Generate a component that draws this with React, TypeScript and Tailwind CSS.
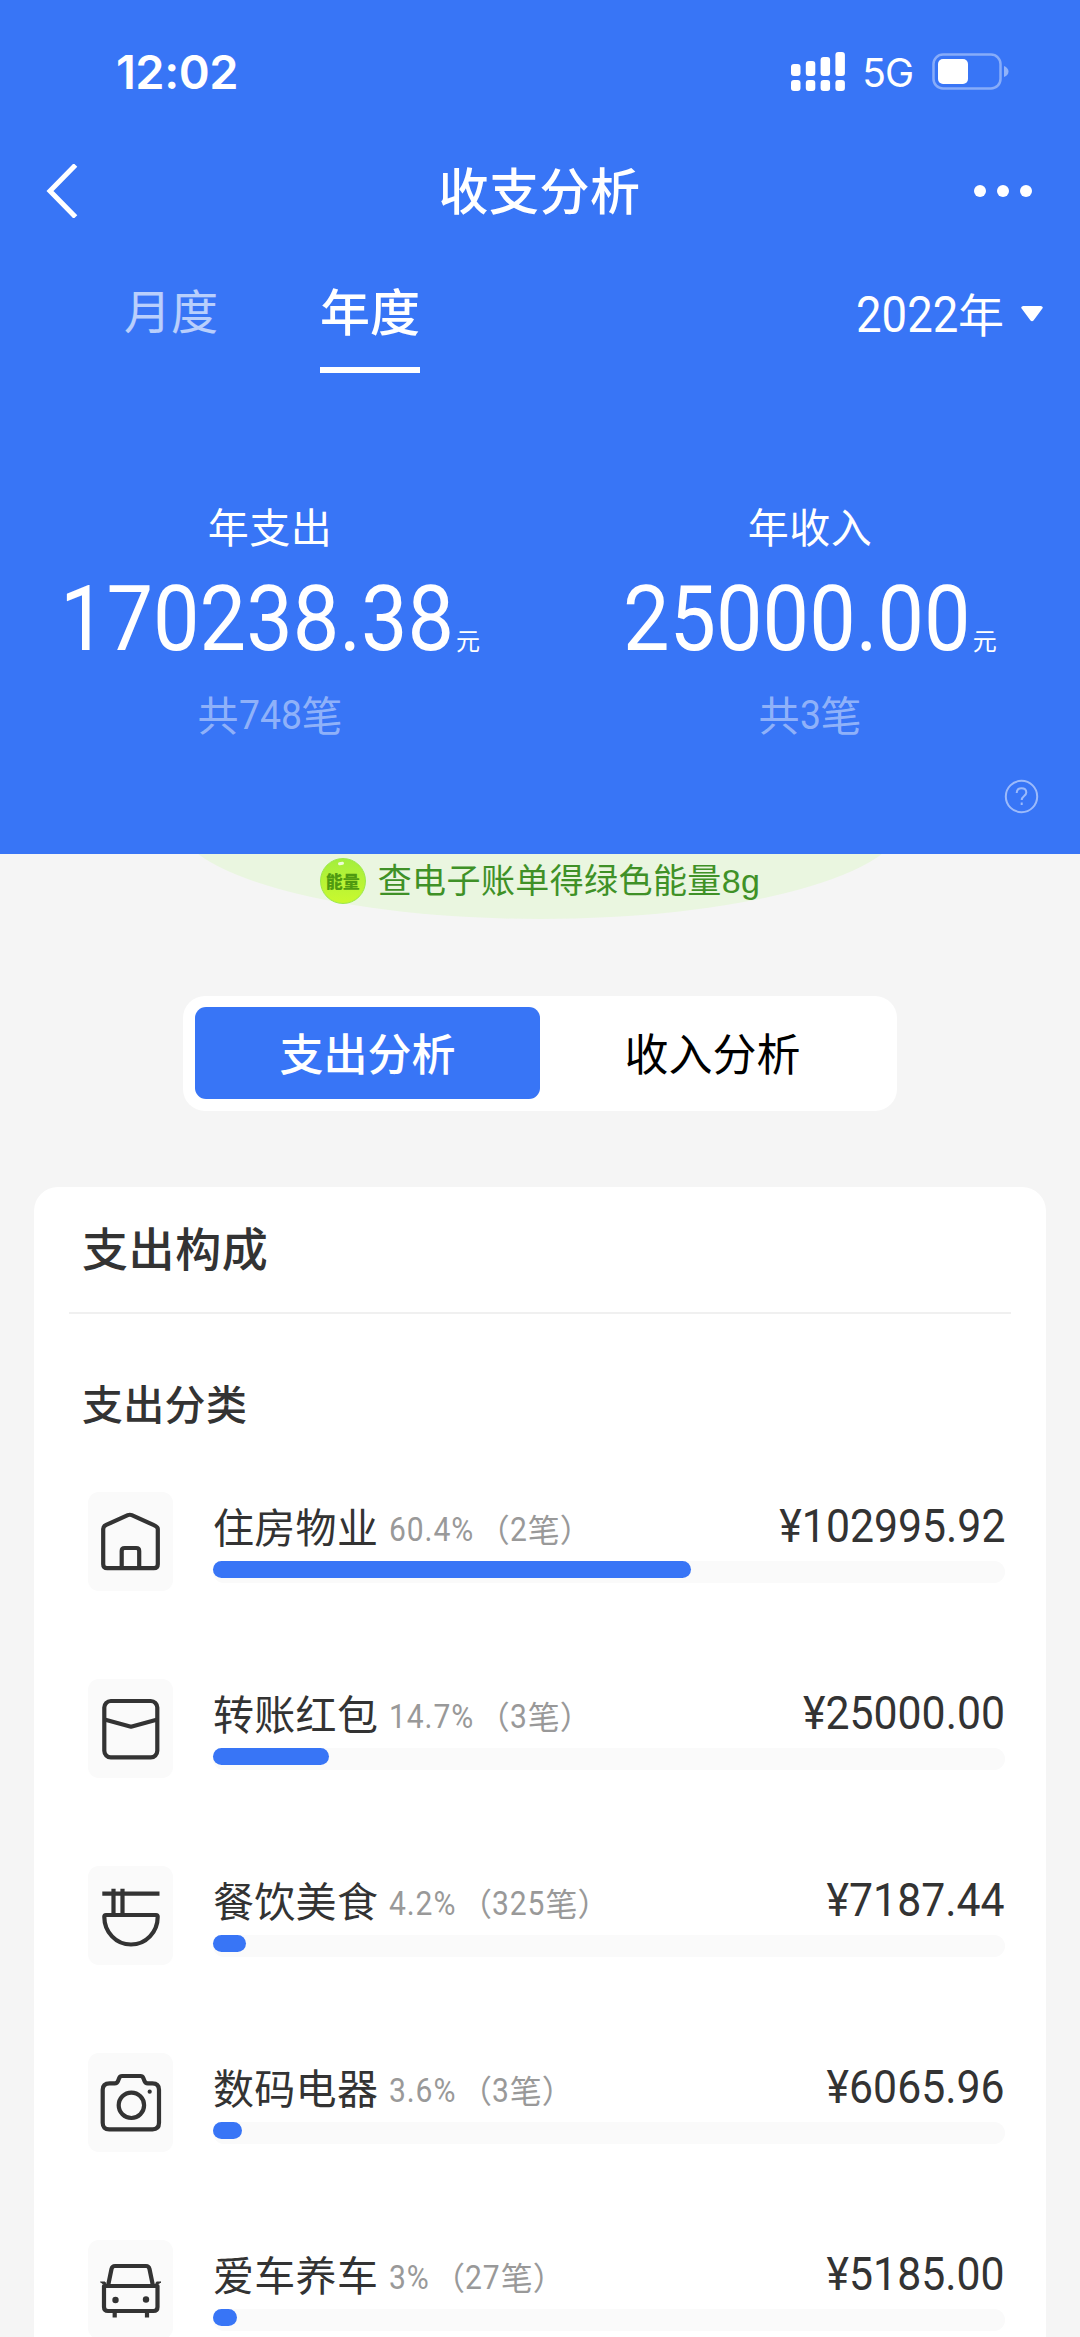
import React from 'react';

type Category = {
  name: string;
  percent: number;
  count: number;
  amount: string;
  icon: React.ReactNode;
};

const HouseIcon = () => (
  <>
    <path d="M5.200 12.900 26.800 3.200q2-.9 4 0l21.600 9.700q4.400 2 4.400 4v35.300q0 4-4 4H6.200q-4 0-4-4V16.900q0-2.600 3-4Z" />
    <path d="M20.700 56V39q0-3 3-3h11.500q3 0 3 3v17" />
  </>
);

const EnvelopeIcon = () => (
  <>
    <rect x="3.300" y="2" width="53" height="56.300" rx="6.500" />
    <path d="M3.500 20.500 30 27.700l26.500-7.200" />
  </>
);

const BowlIcon = () => (
  <>
    <path d="M1.300 7.700h57.200M12.500 2.700V29M21.500 2.700V29" />
    <path d="M5 29h50q1.700 0 1.700 1.700C56.700 46 45 58.500 30 58.500S3.300 46 3.300 30.700Q3.300 29 5 29Z" />
  </>
);

const CameraIcon = () => (
  <>
    <path d="M8.700 10.300h5q2.500 0 3.300-2.300l1.200-3q.8-2 2.800-2h18.500q2 0 2.800 2l1.200 3q.8 2.300 3.300 2.300h4.500q6.700 0 6.700 6.500v33q0 6.500-6.500 6.500H8.200q-6.500 0-6.500-6.500v-33q0-6.500 7-6.500Z" />
    <circle cx="30.400" cy="32.300" r="12.700" />
    <circle cx="48.700" cy="18.700" r="2.100" fill="#333" stroke="none" />
  </>
);

const CarIcon = () => (
  <>
    <path d="M7 26 10.500 9q.7-3 3.500-3h31q2.800 0 3.500 3L52 26" />
    <path d="M3 26h53.500v21q0 4-4 4H7q-4 0-4-4Z" />
    <path d="M-.5 22h4.500l1.500 4ZM60 22h-4.500l-1.500 4Z" fill="#333" strokeWidth="1" />
    <path d="M13.700 52v5.500M46 52v5.500" />
    <circle cx="14.500" cy="40" r="3.200" fill="#333" stroke="none" />
    <circle cx="45" cy="39.500" r="3.200" fill="#333" stroke="none" />
  </>
);

const categories: Category[] = [
  { name: '住房物业', percent: 60.4, count: 2, amount: '102995.92', icon: <HouseIcon /> },
  { name: '转账红包', percent: 14.7, count: 3, amount: '25000.00', icon: <EnvelopeIcon /> },
  { name: '餐饮美食', percent: 4.2, count: 325, amount: '7187.44', icon: <BowlIcon /> },
  { name: '数码电器', percent: 3.6, count: 3, amount: '6065.96', icon: <CameraIcon /> },
  { name: '爱车养车', percent: 3, count: 27, amount: '5185.00', icon: <CarIcon /> },
];

// Advance widths in em, digits share one width
const CHAR_WIDTH: Record<string, number> = { '.': 0.263, '%': 0.733, '¥': 0.527 };

// Narrow figures; the negative margin gives back the room that the scaling frees
const Digits = ({ text, className = '' }: { text: string; className?: string }) => {
  const width = [...text].reduce((sum, ch) => sum + (CHAR_WIDTH[ch] ?? 0.5615), 0);
  return (
    <span
      className={`inline-block origin-left scale-x-[0.91] font-['Roboto'] ${className}`}
      style={{ marginRight: `${(-width * 0.09).toFixed(3)}em` }}
    >
      {text}
    </span>
  );
};

const StatusBar = () => (
  <div className="flex h-[142px] items-start justify-between pl-[116px] pr-[71px]">
    <div className="pt-[44px] font-['Inter'] text-[47px] font-semibold leading-[56px] tracking-[-0.5px]">12:02</div>
    <div className="flex items-center pt-[44px]">
      <svg width="54" height="40" viewBox="0 0 54 40" fill="#fff">
        {[12, 9, 5, 0].map((top, i) => (
          <g key={i}>
            <rect x={i * 14.8} y={top} width="9.500" height={24 - top} rx="3" />
            <rect x={i * 14.8} y="28" width="9.500" height="11" rx="3" />
          </g>
        ))}
      </svg>
      <span className="ml-[17px] mt-[3px] font-['Inter'] text-[39px] leading-[52px] tracking-[-1px]">5G</span>
      <svg className="ml-[19px]" width="77" height="38" viewBox="0 0 77 38" fill="none">
        <rect x="1.500" y="1.500" width="67" height="34" rx="9.500" stroke="#fff" strokeOpacity=".4" strokeWidth="2.500" />
        <rect x="6" y="6" width="30" height="25" rx="5" fill="#fff" />
        <path d="M72 13q4.500 2 4.500 5.500T72 24Z" fill="#fff" fillOpacity=".45" />
      </svg>
    </div>
  </div>
);

const NavBar = () => (
  <div className="flex h-[98px] items-center justify-between pl-[46px] pr-[48px]">
    <svg width="53" height="54" viewBox="0 0 53 54" fill="none" stroke="#fff" strokeWidth="5">
      <path d="M29.500 1 4 27 29.500 53" />
    </svg>
    <h1 className="pb-[7px] pl-[6px] text-[50px] font-medium leading-[70px] tracking-[0.5px]">收支分析</h1>
    <div className="flex gap-[11px]">
      <i className="size-[12px] rounded-full bg-white" />
      <i className="size-[12px] rounded-full bg-white" />
      <i className="size-[12px] rounded-full bg-white" />
    </div>
  </div>
);

const Tabs = () => (
  <div className="flex h-[133px] items-start pl-[123px] pr-[37px] pt-[34px]">
    <button className="pl-[1px] text-[47px] leading-[70px] text-white/65">月度</button>
    <button className="ml-[102px] flex flex-col items-center text-[50px] font-medium leading-[70px]">
      年度
      <span className="mt-[23px] h-[6px] w-[100px] bg-white" />
    </button>
    <button className="ml-auto flex items-center text-[46px] leading-[76px]">
      <Digits text="2022" className="mt-[2px] text-[50px]" />
      <span className="pb-[4px]">年</span>
      <svg className="ml-[17px]" width="22" height="16" viewBox="0 0 22 16" fill="#fff">
        <path d="M2 0h18q3 1 1 3L12.500 14.500q-1.500 1.500-3 0L1 3Q-1 1 2 0Z" />
      </svg>
    </button>
  </div>
);

const YearStat = ({ label, value, count }: { label: string; value: string; count: number }) => (
  <div className="flex w-1/2 flex-col items-center">
    <div className="text-[41px] leading-[60px] tracking-[0.5px]">{label}</div>
    <div className="mt-[10px] flex h-[110px] items-baseline leading-[108px]">
      <Digits text={value} className="text-[91px]" />
      <span className="ml-[2px] text-[24px]">元</span>
    </div>
    <div className="flex items-center text-[41px] leading-[72px] text-white/45">
      共<Digits text={`${count}`} className="mt-[4px] text-[41px]" />笔
    </div>
  </div>
);

const CategoryRow = ({ name, percent, count, amount, icon }: Category) => (
  <li className="flex h-[187px] shrink-0 items-start">
    <div className="flex h-[99px] w-[85px] items-center justify-center rounded-[11px] bg-[#fafafa]">
      <svg className="overflow-visible" width="60" height="60" viewBox="0 0 60 60" fill="none" stroke="#333" strokeWidth="4.200" strokeLinejoin="round">
        {icon}
      </svg>
    </div>
    <div className="ml-[40px] w-[792px]">
      <div className="flex h-[69px] items-center">
        <span className="pb-[3px] text-[41px] leading-[64px] tracking-[0.3px] text-[#333]">{name}</span>
        <Digits text={`${percent}%`} className="ml-[11px] mt-[7px] text-[33px] tracking-[1px] text-[#999]" />
        <span className="ml-[3px] flex items-center pt-[3px] text-[32px] text-[#999]">
          （<Digits text={`${count}`} className="mt-[4px] text-[33px] tracking-[1px]" />笔）
        </span>
        <span className="ml-auto inline-block origin-right scale-x-[0.91] font-['Roboto'] text-[47px] text-[#333]">¥{amount}</span>
      </div>
      <div className="h-[22px] rounded-full bg-[#fafafa]">
        <div className="h-[17px] rounded-full bg-[#3875f6]" style={{ width: `${percent}%` }} />
      </div>
    </div>
  </li>
);

export default function App() {
  return (
    <div className="flex h-[2337px] w-[1080px] flex-col overflow-hidden bg-[#f5f5f5] font-['Noto_Sans_CJK_SC',sans-serif]">
      {/* Header */}
      <header className="h-[854px] shrink-0 bg-[#3875f6] text-white">
        <StatusBar />
        <NavBar />
        <Tabs />
        <div className="flex pt-[122px]">
          <YearStat label="年支出" value="170238.38" count={748} />
          <YearStat label="年收入" value="25000.00" count={3} />
        </div>
        <div className="flex justify-end pr-[41px] pt-[28px]">
          <svg width="35" height="35" viewBox="0 0 35 35" fill="none" stroke="#fff" strokeOpacity=".5" strokeWidth="2">
            <circle cx="17.500" cy="17.500" r="15.700" />
            <path d="M12.700 14q0-4.800 4.800-4.800t4.800 4.300c0 3.500-4.600 3.500-4.600 7.500M17.700 23.500v2.500" />
          </svg>
        </div>
      </header>

      {/* Green energy tip, scrolled halfway under the header */}
      <div className="flex h-[65px] shrink-0 items-end justify-center overflow-hidden">
        <div className="flex h-[198px] w-[728px] shrink-0 items-end justify-center rounded-[50%] bg-[#eaf6e0] pb-[15px]">
          <div className="relative flex size-[46px] items-center justify-center rounded-full border border-[#9be84a] bg-linear-to-b from-[#a3ee3c] to-[#c9f92e] text-[17px] font-black text-[#4f9a10]">
            <i className="absolute left-[17px] top-[3px] h-[3px] w-[6px] -rotate-12 rounded-full bg-white/80" />
            能量
          </div>
          <span className="ml-[12px] font-['Liberation_Sans','Noto_Sans_CJK_SC',sans-serif] text-[34px] leading-[46px] tracking-[0.4px] text-[#3f9127]">查电子账单得绿色能量8g</span>
        </div>
      </div>

      {/* Expense / income switch */}
      <div className="mx-auto mt-[77px] flex h-[115px] w-[714px] shrink-0 rounded-[22px] bg-white p-[12px] pt-[11px] text-[44px] leading-[90px]">
        <button className="h-[92px] w-[345px] rounded-[11px] bg-[#3875f6] pb-[2px] font-medium text-white">支出分析</button>
        <button className="h-[92px] w-[345px] pb-[2px] text-black">收入分析</button>
      </div>

      {/* Breakdown card */}
      <section className="mx-[34px] mt-[76px] h-[1200px] shrink-0 rounded-t-[24px] bg-white px-[35px] text-[#333]">
        <h2 className="h-[127px] border-b-2 border-[#f0f0f0] pl-[13px] text-[46px] font-medium leading-[118px] tracking-[0.6px]">支出构成</h2>
        <h3 className="pl-[13px] pt-[58px] text-[41px] font-medium leading-[60px] tracking-[0.3px]">支出分类</h3>
        <ul className="flex flex-col pl-[19px] pt-[60px]">
          {categories.map((item) => (
            <CategoryRow key={item.name} {...item} />
          ))}
        </ul>
      </section>
    </div>
  );
}
